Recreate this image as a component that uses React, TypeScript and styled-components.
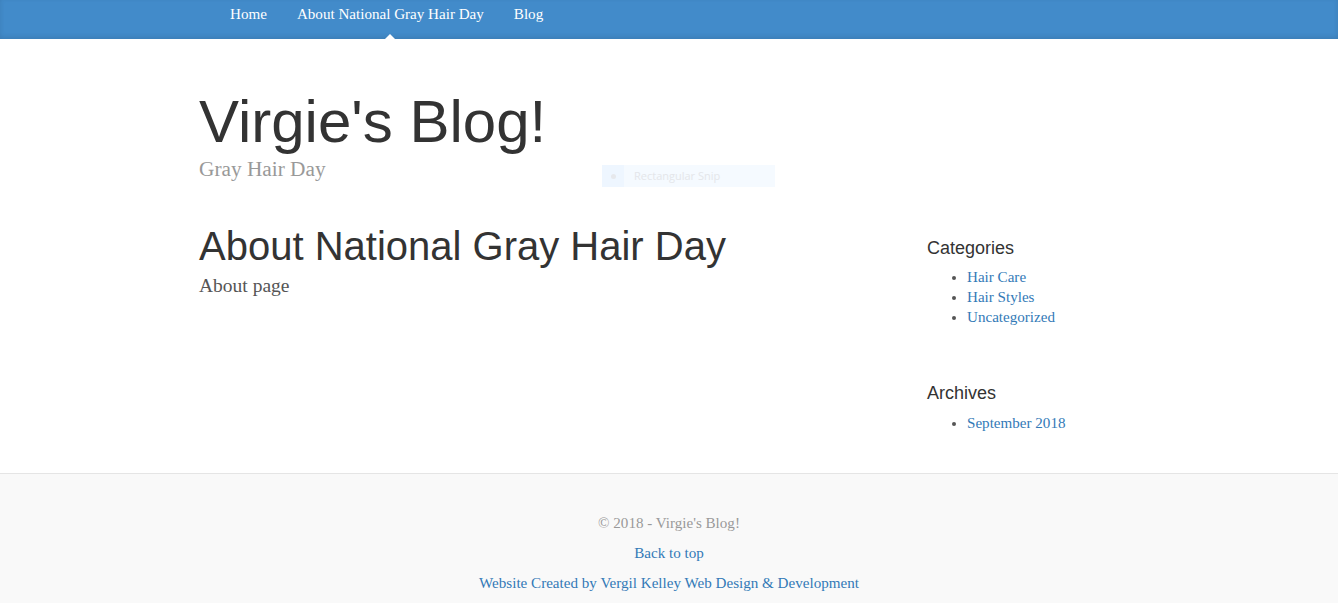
import React from 'react';
import styled, { createGlobalStyle } from 'styled-components';

const Color = {
  NAV: '#428bca',
  LINK: '#337ab7',
  TEXT: '#555',
  HEADING: '#333',
  MUTED: '#999',
};

const GlobalStyle = createGlobalStyle`
  *, *::before, *::after { box-sizing: border-box; }
  body {
    margin: 0;
    background: #fff;
    font-family: "Liberation Serif", "Times New Roman", serif;
    font-size: 15.1px;
    line-height: 20px;
    color: ${Color.TEXT};
  }
  a { color: ${Color.LINK}; text-decoration: none; }
`;

const Page = styled.div`
  position: relative;
`;

const Container = styled.div`
  width: 970px;
  margin: 0 auto;
  padding: 0 15px;
`;

const Masthead = styled.div`
  background-color: ${Color.NAV};
  box-shadow: inset 0 -2px 5px rgba(0, 0, 0, 0.1);
`;

const Nav = styled.nav`
  display: flex;
  height: 39px;
  padding-left: 16px;
`;

const NavItem = styled.a<{ $active?: boolean }>`
  position: relative;
  display: flex;
  align-items: center;
  padding: 0 15px 11px;
  color: #fff;
  font-size: 15.1px;

  &::after {
    content: '';
    display: ${p => (p.$active ? 'block' : 'none')};
    position: absolute;
    bottom: 0;
    left: 50%;
    margin-left: -5px;
    border: 5px solid transparent;
    border-bottom-color: #fff;
    border-top-width: 0;
  }
`;

const Header = styled.div`
  padding: 20px 0 20px;
`;

const Title = styled.h1`
  margin: 30px 0 0;
  font-family: "Liberation Sans", Arial, sans-serif;
  font-weight: normal;
  font-size: 60px;
  line-height: 1.1;
  color: ${Color.HEADING};
`;

const Description = styled.p`
  margin: 0 0 10px;
  font-size: 21.3px;
  line-height: 28.5px;
  color: ${Color.MUTED};
`;

const Row = styled.div`
  display: flex;
  align-items: flex-start;
`;

const Main = styled.main`
  flex: 0 0 617px;
`;

const PostTitle = styled.h2`
  margin: 10px 0 5px;
  font-family: "Liberation Sans", Arial, sans-serif;
  font-weight: normal;
  font-size: 40px;
  line-height: 1.1;
  color: ${Color.HEADING};
`;

const Lead = styled.p`
  margin: 0;
  font-size: 19.5px;
  line-height: 26px;
`;

const Sidebar = styled.aside`
  width: 212px;
  margin-left: auto;
`;

const Module = styled.section`
  padding: 15px 0;
`;

const ModuleTitle = styled.h4`
  margin: 10px 0 9px;
  font-family: "Liberation Sans", Arial, sans-serif;
  font-weight: normal;
  font-size: 18px;
  line-height: 1.1;
  color: ${Color.HEADING};
`;

const List = styled.ul<{ $gap?: number }>`
  margin: 0 0 ${p => p.$gap ?? 14}px;
  padding-left: 40px;
`;

const Footer = styled.footer`
  margin-top: 11px;
  padding: 39px 0 40px;
  text-align: center;
  color: ${Color.MUTED};
  background-color: #f9f9f9;
  border-top: 1px solid #e5e5e5;

  p { margin: 0 0 10px; }
`;

const Snip = styled.div`
  position: absolute;
  left: 602px;
  top: 165px;
  width: 173px;
  height: 22px;
  display: flex;
  align-items: center;
  background: #f5faff;
  font-family: "Open Sans", "Liberation Sans", sans-serif;
  font-size: 11px;
  color: #e4e6ea;
`;

const SnipIcon = styled.span`
  width: 22px;
  height: 22px;
  margin-right: 10px;
  display: flex;
  align-items: center;
  justify-content: center;
  background: #eef6ff;

  &::before {
    content: '';
    width: 5px;
    height: 5px;
    border-radius: 50%;
    background: #e6e8ec;
  }
`;

const categories = ['Hair Care', 'Hair Styles', 'Uncategorized'];

const App: React.FC = () => {
  return (
    <Page>
      <GlobalStyle />
      <Masthead>
        <Container>
          <Nav>
            <NavItem href="#">Home</NavItem>
            <NavItem href="#" $active>About National Gray Hair Day</NavItem>
            <NavItem href="#">Blog</NavItem>
          </Nav>
        </Container>
      </Masthead>

      <Container>
        <Header>
          <Title>Virgie's Blog!</Title>
          <Description>Gray Hair Day</Description>
        </Header>

        <Row>
          <Main>
            <PostTitle>About National Gray Hair Day</PostTitle>
            <Lead>About page</Lead>
          </Main>
          <Sidebar>
            <Module>
              <ModuleTitle>Categories</ModuleTitle>
              <List $gap={17}>
                {categories.map(c => (
                  <li key={c}><a href="#">{c}</a></li>
                ))}
              </List>
            </Module>
            <Module>
              <ModuleTitle>Archives</ModuleTitle>
              <List>
                <li><a href="#">September 2018</a></li>
              </List>
            </Module>
          </Sidebar>
        </Row>
      </Container>

      <Footer>
        <p>© 2018 - Virgie's Blog!</p>
        <p><a href="#">Back to top</a></p>
        <p><a href="#">Website Created by Vergil Kelley Web Design &amp; Development</a></p>
      </Footer>

      <Snip>
        <SnipIcon />
        Rectangular Snip
      </Snip>
    </Page>
  );
};

export default App;
